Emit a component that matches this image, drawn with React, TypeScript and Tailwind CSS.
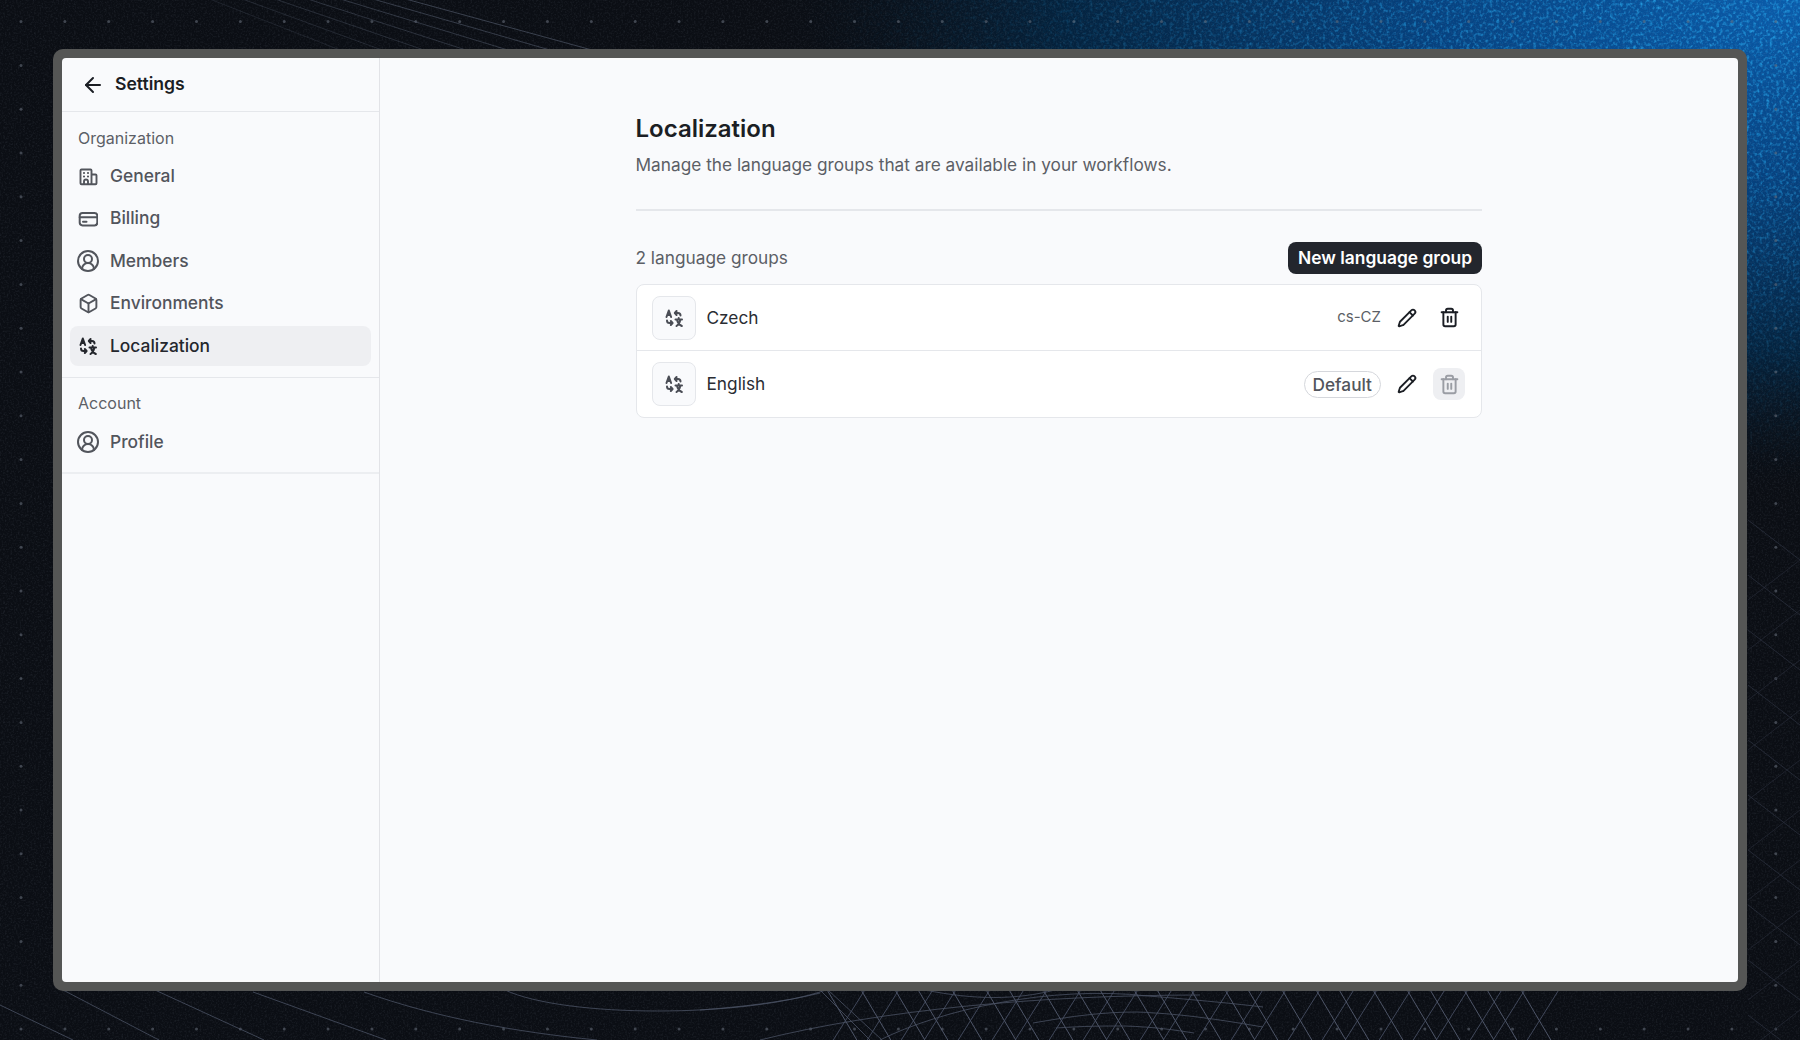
import { ArrowLeft, Box, CircleUserRound, Pencil, Trash2 } from "lucide-react";
import type { ReactNode } from "react";

function TranslateIcon({ className }: { className?: string }) {
  return (
    <svg viewBox="0 0 20 20" fill="none" stroke="currentColor" strokeWidth="2" strokeLinecap="round" strokeLinejoin="round" className={className}>
      <path d="M2.500 9 4.800 2.500 7.100 9M3.400 7h2.800" />
      <path d="M11 5h3c1.500 0 2.500 1 2.500 2.500M12.600 3 10.800 5l1.800 2" />
      <path d="M8.500 15h-3C4 15 3 14 3 12.500M6.800 13l1.800 2-1.800 2" />
      <path d="M11.500 11.500h6.500M14.700 10v1.500M12.500 18c2.300-1.300 3.300-3.300 3.800-6.500M13 11.500c.5 3 2.300 5.300 4.800 6.500" />
    </svg>
  );
}

function BuildingIcon({ className }: { className?: string }) {
  return (
    <svg viewBox="0 0 20 20" fill="none" stroke="currentColor" strokeWidth="1.900" strokeLinecap="round" strokeLinejoin="round" className={className}>
      <path d="M13.500 18.300H3.500a1 1 0 0 1-1-1V4.500a1 1 0 0 1 1-1h9a1 1 0 0 1 1 1v13.800h4a1 1 0 0 0 1-1V9.500a1 1 0 0 0-1-1h-4" />
      <path d="M6 7h.01M10 7h.01M6 10.500h.01M10 10.500h.01" strokeWidth="2.200" />
      <path d="M6 18v-2.500a2 2 0 0 1 4 0V18" />
    </svg>
  );
}

function CardIcon({ className }: { className?: string }) {
  return (
    <svg viewBox="0 0 20 20" fill="none" stroke="currentColor" strokeWidth="2" strokeLinecap="round" strokeLinejoin="round" className={className}>
      <rect x="1.700" y="4" width="17.600" height="12.400" rx="2.800" />
      <path d="M1.700 8.200h17.600M5 12.800h3.500" />
    </svg>
  );
}

function BackgroundArt() {
  const dots = [];
  for (let c = 0; c < 42; c++) {
    for (let r = 0; r < 24; r++) {
      dots.push(<circle key={`${c}-${r}`} cx={21 + c * 43.87} cy={21.6 + r * 43.8} r="1.500" fill="#6b7280" opacity="0.55" />);
    }
  }
  const fan = [];
  for (let i = 0; i < 7; i++) {
    fan.push(<line key={i} x1={207 + i * 32.500} y1={-2} x2={340 + i * 42} y2={50} stroke="#565f70" strokeWidth="0.700" opacity={0.35 + i * 0.09} />);
  }
  const mesh = [];
  for (let i = 0; i < 24; i++) {
    const x = 826 + i * 30 + (i * 37) % 11;
    mesh.push(<line key={`a${i}`} x1={x} y1={988} x2={x + 32} y2={1042} stroke="#565e72" strokeWidth="0.900" />);
    mesh.push(<line key={`b${i}`} x1={x + 40} y1={988} x2={x + 6} y2={1042} stroke="#464e62" strokeWidth="0.900" />);
  }
  const side = [];
  for (let i = 0; i < 10; i++) {
    side.push(<line key={`s${i}`} x1={1748} y1={520 + i * 55} x2={1800} y2={560 + i * 55} stroke="#2e3442" strokeWidth="0.700" />);
    side.push(<line key={`t${i}`} x1={1748} y1={600 + i * 50} x2={1800} y2={560 + i * 50} stroke="#262b38" strokeWidth="0.700" />);
  }
  return (
    <svg viewBox="0 0 1800 1040" className="absolute inset-0 h-full w-full">
      <defs>
        <radialGradient id="glow" cx="0" cy="0" r="1" gradientUnits="userSpaceOnUse" gradientTransform="translate(1800 0) scale(1050 500)">
          <stop offset="0" stopColor="#0a5cab" />
          <stop offset="0.35" stopColor="#064280" />
          <stop offset="0.7" stopColor="#04233f" />
          <stop offset="1" stopColor="#0b0e14" stopOpacity="0" />
        </radialGradient>
        <filter id="grain" x="0" y="0" width="100%" height="100%">
          <feTurbulence type="fractalNoise" baseFrequency="0.55" numOctaves="2" seed="4" />
          <feColorMatrix type="matrix" values="0 0 0 0 0.42  0 0 0 0 0.5  0 0 0 0 0.62  1.6 0 0 0 -0.72" />
        </filter>
        <filter id="blueGrain" x="0" y="0" width="100%" height="100%">
          <feTurbulence type="fractalNoise" baseFrequency="0.3" numOctaves="2" seed="9" />
          <feColorMatrix type="matrix" values="0 0 0 0 0.02  0 0 0 0 0.4  0 0 0 0 0.85  2.2 0 0 0 -1.05" />
        </filter>
        <radialGradient id="blueMask" cx="0" cy="0" r="1" gradientUnits="userSpaceOnUse" gradientTransform="translate(1800 0) scale(1000 480)">
          <stop offset="0" stopColor="#fff" />
          <stop offset="0.45" stopColor="#999" />
          <stop offset="0.75" stopColor="#333" />
          <stop offset="1" stopColor="#000" />
        </radialGradient>
        <mask id="glowMask">
          <rect width="1800" height="1040" fill="url(#blueMask)" />
        </mask>
      </defs>
      <rect width="1800" height="1040" fill="#0b0e14" />
      <rect width="1800" height="1040" fill="url(#glow)" />
      <rect width="1800" height="1040" filter="url(#blueGrain)" mask="url(#glowMask)" />
      <rect width="1800" height="1040" filter="url(#grain)" opacity="0.14" />
      {dots}
      {fan}
      {mesh}
      {side}
      <g fill="none" stroke="#4a5263" strokeWidth="0.800">
        <path d="M0 1005 73 1040M63 990l96 50M155 990l109 50M253 992l133 48M364 992c70 25 150 40 233 48" />
        <path d="M505 990c60 28 240 28 321 0M700 1010c40-3 85-8 120-17M760 1040c120-30 280-45 440-45" />
        <path d="M880 1040c60-30 170-55 268-44 50 4 90 8 115 11" />
        <path d="M1033 1023c40-7 70-11 104-11 50 2 90 9 126 15" />
        <path d="M1056 1028c30-2 45-2 69-2 30 1 50 4 69 7" />
        <path d="M820 990l50 50M828 990l54 50M925 990c50 10 90 10 130 0" />
      </g>
    </svg>
  );
}

type NavItemProps = {
  icon: ReactNode;
  label: string;
  active?: boolean;
};

function NavItem({ icon, label, active }: NavItemProps) {
  return (
    <div className={`flex h-10 items-center gap-3 rounded-lg px-2 text-[17.400px] font-medium ${active ? "bg-[#eeeff2] text-[#24272d]" : "text-[#52555c]"}`}>
      <span className="flex h-5 w-5 shrink-0 items-center justify-center">{icon}</span>
      <span>{label}</span>
    </div>
  );
}

function LanguageRow({ name, children, last }: { name: string; children: ReactNode; last?: boolean }) {
  return (
    <div className={`flex h-[66px] items-center pl-[15px] pr-4 ${last ? "" : "border-b border-[#e5e7eb]"}`}>
      <div className="flex h-11 w-11 items-center justify-center rounded-lg border border-[#e5e7eb] bg-[#f9fafc]">
        <TranslateIcon className="h-5 w-5 text-[#4a4d55]" />
      </div>
      <span className="ml-[11px] text-[17.250px] text-[#2a2d33]">{name}</span>
      <div className="ml-auto flex items-center gap-[10px]">{children}</div>
    </div>
  );
}

export default function App() {
  const iconCls = "h-5 w-5 shrink-0";
  const userCls = "h-6 w-6 shrink-0";
  return (
    <div className="relative h-[1040px] w-[1800px] overflow-hidden font-['Inter',sans-serif]">
      <BackgroundArt />
      <div className="relative flex h-full items-start px-[53px] pt-[49px]">
        <div className="h-[942px] w-full rounded-[10px] bg-[#555655] p-[9px]">
          <div className="flex h-full overflow-hidden rounded-[4px] bg-[#f9fafc]">
            <aside className="w-[318px] shrink-0 border-r border-[#e2e3e7]">
              <div className="flex h-[54px] items-center gap-[10px] border-b border-[#e5e7eb] pl-[19px]">
                <ArrowLeft className="h-6 w-6 text-[#1b1e24]" strokeWidth={2} />
                <span className="text-[17.600px] font-semibold text-[#1b1e24]">Settings</span>
              </div>
              <div className="border-b border-[#e5e7eb] px-2 pb-[11px] pt-[14px]">
                <p className="px-2 pb-[6px] text-[16px] leading-6 text-[#5c5f66]">Organization</p>
                <div className="flex flex-col gap-[2.500px]">
                  <NavItem icon={<BuildingIcon className={iconCls} />} label="General" />
                  <NavItem icon={<CardIcon className={iconCls} />} label="Billing" />
                  <NavItem icon={<CircleUserRound className={userCls} />} label="Members" />
                  <NavItem icon={<Box className="h-[21px] w-[21px] shrink-0" strokeWidth={2.200} />} label="Environments" />
                  <NavItem icon={<TranslateIcon className={iconCls} />} label="Localization" active />
                </div>
              </div>
              <div className="border-b-2 border-[#eceef1] px-2 pb-[10px] pt-[13px]">
                <p className="px-2 pb-[7px] text-[16px] leading-6 text-[#5c5f66]">Account</p>
                <NavItem icon={<CircleUserRound className={userCls} />} label="Profile" />
              </div>
            </aside>
            <main className="flex-1 pl-[255.500px] pr-[256px] pt-[55px]">
              <h1 className="text-[24px] font-semibold leading-8 text-[#1b1e24]">Localization</h1>
              <p className="mt-[8px] text-[17.250px] leading-6 text-[#5c5f66]">Manage the language groups that are available in your workflows.</p>
              <div className="mt-[32px] border-t-2 border-[#e5e7eb]" />
              <div className="mt-[31px] flex items-center justify-between">
                <span className="text-[17.250px] text-[#5c5f66]">2 language groups</span>
                <button className="h-8 rounded-lg bg-[#23262d] px-[10px] text-[17.400px] font-semibold text-white">New language group</button>
              </div>
              <div className="mt-[10px] rounded-lg border border-[#e5e7eb] bg-white">
                <LanguageRow name="Czech">
                  <span className="text-[15px] text-[#5c5f66]">cs-CZ</span>
                  <span className="flex h-8 w-8 items-center justify-center">
                    <Pencil className="h-5 w-5 text-[#1b1e24]" strokeWidth={2.200} />
                  </span>
                  <span className="flex h-8 w-8 items-center justify-center">
                    <Trash2 className="h-[21px] w-[21px] text-[#1b1e24]" strokeWidth={2.200} />
                  </span>
                </LanguageRow>
                <LanguageRow name="English" last>
                  <span className="rounded-full border border-[#d5d7dc] px-2 text-[17.250px] font-medium leading-[25px] text-[#52555c]">Default</span>
                  <span className="flex h-8 w-8 items-center justify-center">
                    <Pencil className="h-5 w-5 text-[#1b1e24]" strokeWidth={2.200} />
                  </span>
                  <span className="flex h-8 w-8 items-center justify-center rounded-lg bg-[#eeeff2]">
                    <Trash2 className="h-[21px] w-[21px] text-[#9a9da4]" strokeWidth={2.200} />
                  </span>
                </LanguageRow>
              </div>
            </main>
          </div>
        </div>
      </div>
    </div>
  );
}
